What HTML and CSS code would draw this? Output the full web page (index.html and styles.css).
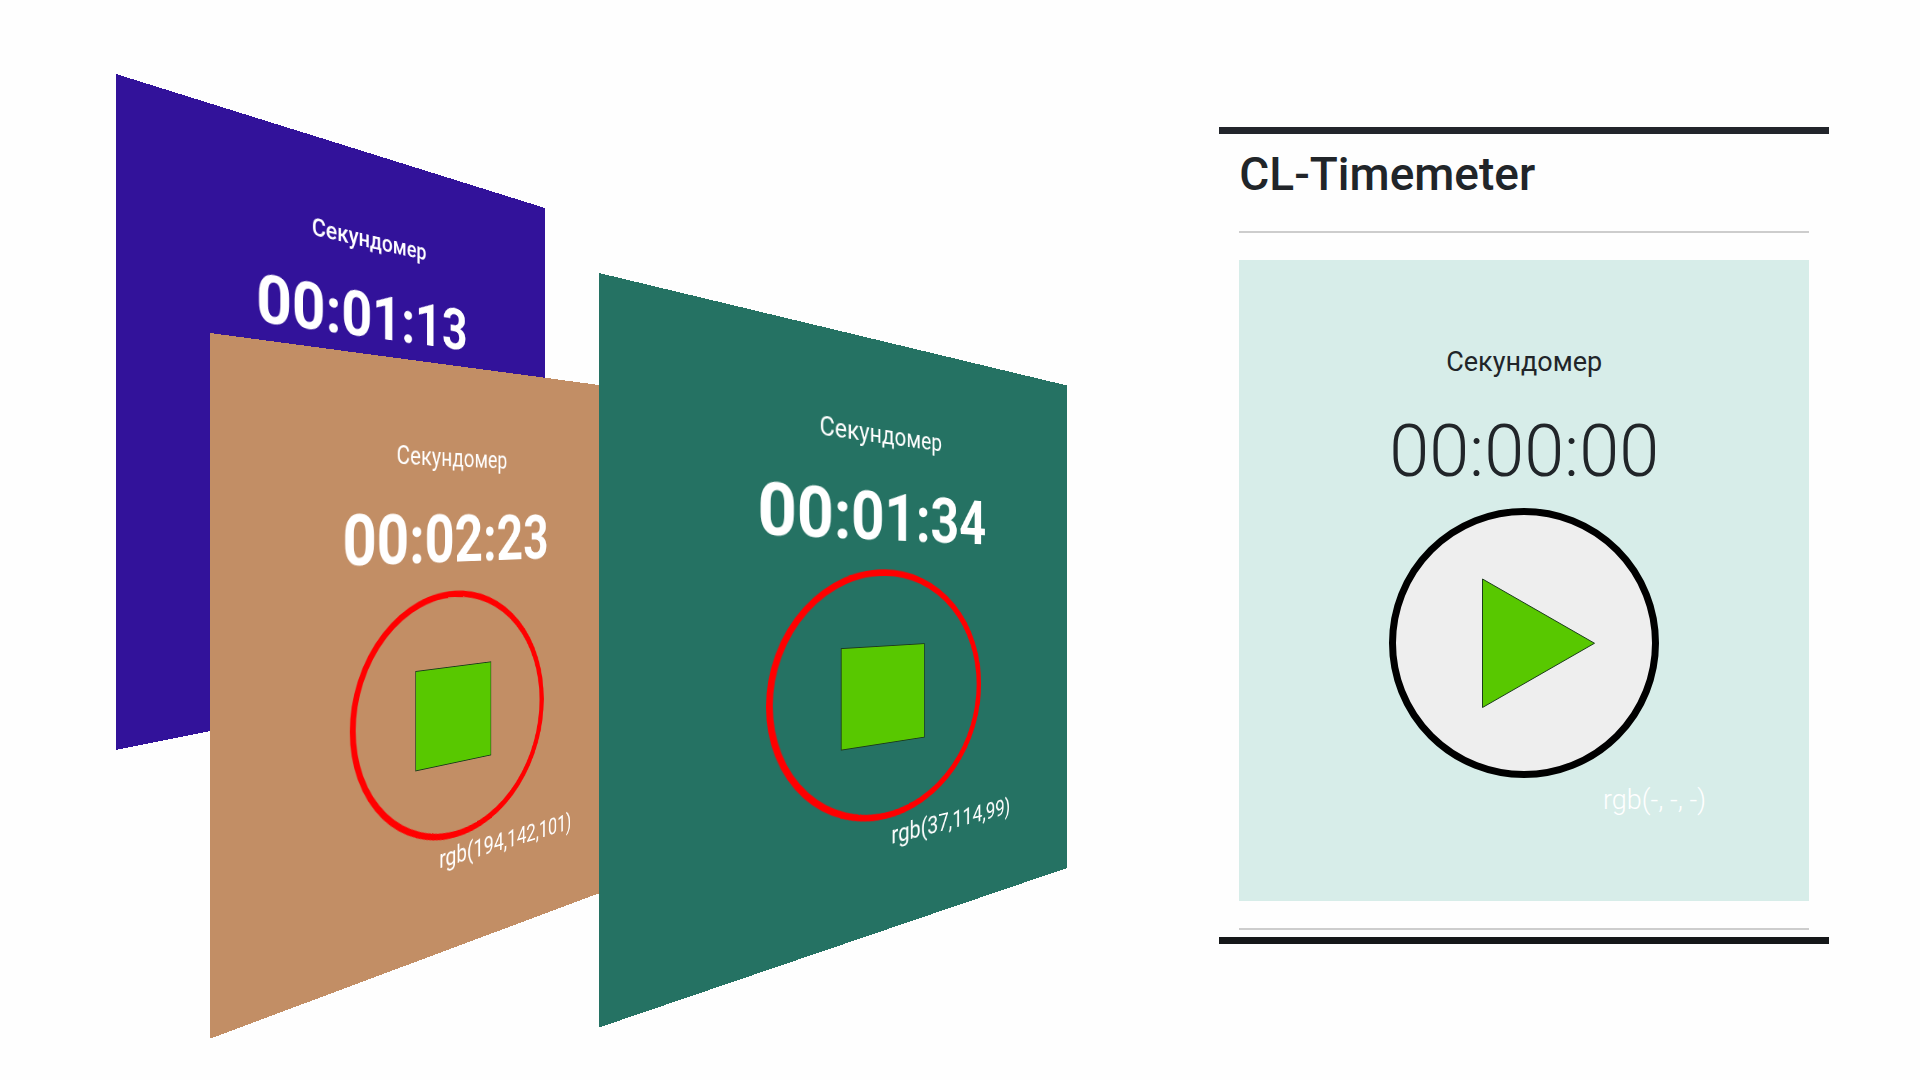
FILE: index.html
```html
<!DOCTYPE html>
<html lang="ru">
<head>
<meta charset="utf-8">
<meta name="viewport" content="width=device-width, initial-scale=1">
<title>CL-Timemeter</title>
<link rel="stylesheet" href="styles.css">
</head>
<body>
<main class="page">
  <section class="stage">
    <article class="card running tilted back">
      <h2 class="label">Секундомер</h2>
      <time class="clock">00:01:13</time>
    </article>
    <article class="card running tilted middle">
      <h2 class="label">Секундомер</h2>
      <time class="clock">00:02:23</time>
      <button class="toggle" type="button" aria-label="Стоп">
        <svg class="icon" viewBox="0 0 270 270" aria-hidden="true"><rect class="shape" x="81.5" y="82.5" width="106" height="106"/></svg>
      </button>
      <p class="color-code">rgb(194,142,101)</p>
    </article>
    <article class="card running tilted front">
      <h2 class="label">Секундомер</h2>
      <time class="clock">00:01:34</time>
      <button class="toggle" type="button" aria-label="Стоп">
        <svg class="icon" viewBox="0 0 270 270" aria-hidden="true"><rect class="shape" x="81.5" y="82.5" width="106" height="106"/></svg>
      </button>
      <p class="color-code">rgb(37,114,99)</p>
    </article>
  </section>

  <section class="app">
    <h1 class="title">CL-Timemeter</h1>
    <hr class="rule">
    <article class="card">
      <h2 class="label">Секундомер</h2>
      <time class="clock">00:00:00</time>
      <button class="toggle" type="button" aria-label="Старт">
        <svg class="icon" viewBox="0 0 270 270" aria-hidden="true"><path class="shape" d="M93.5 71V199.500L205.500 135.250Z"/></svg>
      </button>
      <p class="color-code">rgb(-, -, -)</p>
    </article>
    <hr class="rule">
  </section>
</main>
</body>
</html>
```
FILE: styles.css
```css
* {
  box-sizing: border-box;
}

body {
  margin: 0;
  background: #fefefe;
  color: #212529;
  font-family: Roboto, "Liberation Sans", sans-serif;
}

.page {
  display: grid;
  grid-template-columns: minmax(0, 2fr) minmax(0, 1fr);
  align-items: start;
  min-height: 100vh;
  padding-right: 91px;
  overflow: hidden;
}

.stage {
  position: relative;
  align-self: stretch;
}

.app {
  display: flex;
  flex-direction: column;
  margin-top: 127px;
  padding: 12px 20px 7px;
  border-top: 7px solid #22252b;
  border-bottom: 7px solid #151719;
}

.title {
  margin: 0 0 29px;
  font-size: 46px;
  font-weight: 500;
  line-height: 56px;
}

.rule {
  width: 100%;
  height: 2px;
  margin: 0;
  border: 0;
  background: #cdcdcd;
}

.card {
  display: flex;
  flex-direction: column;
  align-items: center;
  padding: 86px 0 85px;
  background: #d7ede9;
}

.app .card {
  margin: 27px 0;
}

.label {
  margin: 0 0 32px;
  font-size: 27px;
  font-weight: 400;
  line-height: 32px;
}

.clock {
  margin-bottom: 14px;
  font-size: 72px;
  font-weight: 300;
  line-height: 84px;
}

.toggle {
  width: 270px;
  height: 270px;
  margin: 0 0 6px;
  padding: 0;
  overflow: hidden;
  border: 7px solid #000;
  border-radius: 50%;
  background: #eee;
}

.icon {
  display: block;
  width: 270px;
  height: 270px;
  margin: -7px;
}

.shape {
  fill: #58c800;
  stroke: #1c3d1c;
  stroke-width: 1;
}

.color-code {
  align-self: flex-end;
  margin: 0;
  padding-right: 101px;
  color: #fff;
  font-size: 27px;
  line-height: 32px;
}

.app .color-code {
  padding-right: 103px;
  font-weight: 300;
}

.running {
  color: #fff;
}

.running .clock {
  font-weight: 700;
}

.running .toggle {
  width: 272px;
  height: 272px;
  margin-bottom: 4px;
  border-color: #f00;
  background: transparent;
}

.running .icon {
  margin: -6px;
}

/* Cards of the 3D stack: one flat layout, each projected onto its own plane */
.tilted {
  position: absolute;
  width: 569px;
  height: 641px;
  transform-origin: 0 0;
}

.back {
  left: 116px;
  top: 74px;
  background: #32129a;
  transform: matrix3d(1.11774, 0.34913, 0, 0.00084798, 0, 1.0546, 0, 0, 0, 0, 1, 0, 0, 0, 0, 1);
}

.back .label {
  font-weight: 500;
}

.middle {
  left: 210px;
  top: 333px;
  background: rgb(194, 142, 101);
  transform: matrix3d(1.04307, 0.13941, 0, 0.00074991, 0, 1.10094, 0, 0, 0, 0, 1, 0, 0, 0, 0, 1);
}

.front {
  left: 599px;
  top: 273px;
  background: rgb(37, 114, 99);
  transform: matrix3d(1.28615, 0.30917, 0, 0.00099069, 0, 1.17707, 0, 0, 0, 0, 1, 0, 0, 0, 0, 1);
}
```
